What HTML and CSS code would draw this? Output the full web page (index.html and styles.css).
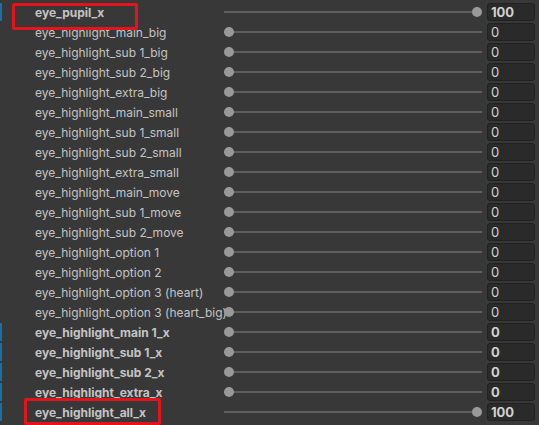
FILE: index.html
```html
<!DOCTYPE html>
<html>
<head>
<meta charset="utf-8">
<link rel="stylesheet" href="styles.css">
</head>
<body>
<div class="list">
  <div class="row mod"><span class="bar"></span><span class="label">eye_pupil_x</span><span class="slider"><span class="knob" style="left:100%"></span></span><span class="field">100</span></div>
  <div class="row"><span class="bar"></span><span class="label">eye_highlight_main_big</span><span class="slider"><span class="knob"></span></span><span class="field">0</span></div>
  <div class="row"><span class="bar"></span><span class="label">eye_highlight_sub 1_big</span><span class="slider"><span class="knob"></span></span><span class="field">0</span></div>
  <div class="row"><span class="bar"></span><span class="label">eye_highlight_sub 2_big</span><span class="slider"><span class="knob"></span></span><span class="field">0</span></div>
  <div class="row"><span class="bar"></span><span class="label">eye_highlight_extra_big</span><span class="slider"><span class="knob"></span></span><span class="field">0</span></div>
  <div class="row"><span class="bar"></span><span class="label">eye_highlight_main_small</span><span class="slider"><span class="knob"></span></span><span class="field">0</span></div>
  <div class="row"><span class="bar"></span><span class="label">eye_highlight_sub 1_small</span><span class="slider"><span class="knob"></span></span><span class="field">0</span></div>
  <div class="row"><span class="bar"></span><span class="label">eye_highlight_sub 2_small</span><span class="slider"><span class="knob"></span></span><span class="field">0</span></div>
  <div class="row"><span class="bar"></span><span class="label">eye_highlight_extra_small</span><span class="slider"><span class="knob"></span></span><span class="field">0</span></div>
  <div class="row"><span class="bar"></span><span class="label">eye_highlight_main_move</span><span class="slider"><span class="knob"></span></span><span class="field">0</span></div>
  <div class="row"><span class="bar"></span><span class="label">eye_highlight_sub 1_move</span><span class="slider"><span class="knob"></span></span><span class="field">0</span></div>
  <div class="row"><span class="bar"></span><span class="label">eye_highlight_sub 2_move</span><span class="slider"><span class="knob"></span></span><span class="field">0</span></div>
  <div class="row"><span class="bar"></span><span class="label">eye_highlight_option 1</span><span class="slider"><span class="knob"></span></span><span class="field">0</span></div>
  <div class="row"><span class="bar"></span><span class="label">eye_highlight_option 2</span><span class="slider"><span class="knob"></span></span><span class="field">0</span></div>
  <div class="row"><span class="bar"></span><span class="label">eye_highlight_option 3 (heart)</span><span class="slider"><span class="knob"></span></span><span class="field">0</span></div>
  <div class="row"><span class="bar"></span><span class="label">eye_highlight_option 3 (heart_big)</span><span class="slider"><span class="knob"></span></span><span class="field">0</span></div>
  <div class="row mod"><span class="bar"></span><span class="label">eye_highlight_main 1_x</span><span class="slider"><span class="knob"></span></span><span class="field">0</span></div>
  <div class="row mod"><span class="bar"></span><span class="label">eye_highlight_sub 1_x</span><span class="slider"><span class="knob"></span></span><span class="field">0</span></div>
  <div class="row mod"><span class="bar"></span><span class="label">eye_highlight_sub 2_x</span><span class="slider"><span class="knob"></span></span><span class="field">0</span></div>
  <div class="row mod"><span class="bar"></span><span class="label">eye_highlight_extra_x</span><span class="slider"><span class="knob"></span></span><span class="field">0</span></div>
  <div class="row mod"><span class="bar"></span><span class="label">eye_highlight_all_x</span><span class="slider"><span class="knob" style="left:100%"></span></span><span class="field">100</span></div>
  <div class="mark mark-top"></div>
  <div class="mark mark-bottom"></div>
</div>
</body>
</html>
```
FILE: styles.css
```css
html, body {
  margin: 0;
  padding: 0;
  background: #383838;
  width: 539px;
  height: 425px;
  overflow: hidden;
}
.list {
  position: relative;
  padding-top: 2px;
  font-family: Inter, "Noto Sans", sans-serif;
  font-size: 12px;
  color: #c4c4c4;
}
.row {
  display: flex;
  align-items: center;
  height: 20px;
}
.bar {
  width: 2px;
  height: 18px;
  flex: none;
}
.row.mod .bar {
  background: #1b6ea6;
}
.label {
  width: 222px;
  padding-left: 33px;
  box-sizing: border-box;
  white-space: nowrap;
  flex: none;
}
.row.mod .label,
.row.mod .field {
  font-weight: 700;
}
.slider {
  position: relative;
  flex: 1;
  height: 2px;
  background: #5e5e5e;
  margin-right: 5px;
}
.knob {
  position: absolute;
  left: 0;
  top: 50%;
  width: 10px;
  height: 10px;
  margin-left: 0;
  border-radius: 50%;
  background: #999999;
  transform: translate(0, -50%);
}
.knob[style] {
  transform: translate(-100%, -50%);
}
.field {
  flex: none;
  width: 48px;
  height: 18px;
  box-sizing: border-box;
  margin-right: 4px;
  background: #2a2a2a;
  border: 1px solid #212121;
  border-radius: 3px;
  padding-left: 3px;
  line-height: 16px;
  color: #d2d2d2;
  font-size: 13px;
}
.mark {
  position: absolute;
  border: 3px solid #e3141b;
  border-radius: 2px;
  box-sizing: border-box;
}
.mark-top {
  left: 12px;
  top: 3px;
  width: 126px;
  height: 27px;
}
.mark-bottom {
  left: 24px;
  top: 398px;
  width: 137px;
  height: 27px;
}
```
